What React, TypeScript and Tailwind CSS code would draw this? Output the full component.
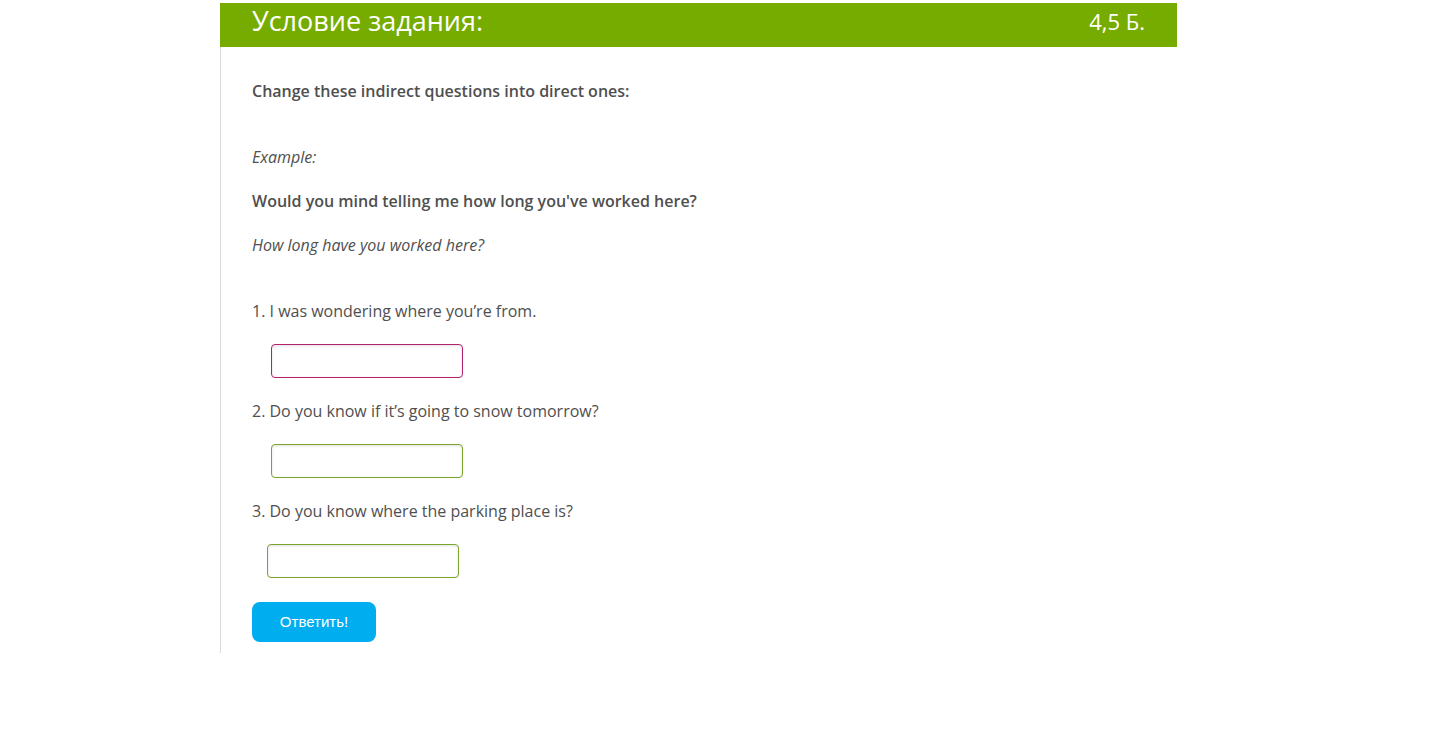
export default function App() {
  const font = { fontFamily: '"Open Sans", "Noto Sans", sans-serif' };
  return (
    <div className="min-h-[756px] w-full bg-white pt-[3px]" style={font}>
      <div className="ml-[220px] w-[957px]">
        <div className="flex h-[44px] items-center justify-between bg-[#76ac00] px-[32px] pb-[9px] text-white">
          <span className="text-[27px] leading-none">Условие задания:</span>
          <span className="text-[22px] leading-none">4,5 Б.</span>
        </div>
        <div className="border-l border-[#d9d9d9] pb-[11px] pl-[31px] pt-[32px] text-[16px] leading-[24px] text-[#4f4f4f]">
          <p className="font-semibold">Change these indirect questions into direct ones:</p>
          <p className="mt-[42px] italic">Example:</p>
          <p className="mt-[20px] font-semibold">Would you mind telling me how long you've worked here?</p>
          <p className="mt-[20px] italic">How long have you worked here?</p>
          <p className="mt-[42px]">1. I was wondering where you’re from.</p>
          <div className="mt-[21px] pl-[19px]">
            <input className="block h-[34px] w-[192px] rounded-[4px] border border-[#b5216b] bg-white shadow-[inset_0_1px_3px_rgba(0,0,0,0.12)] outline-none" />
          </div>
          <p className="mt-[21px]">2. Do you know if it’s going to snow tomorrow?</p>
          <div className="mt-[21px] pl-[19px]">
            <input className="block h-[34px] w-[192px] rounded-[4px] border border-[#7ba52a] bg-white shadow-[inset_0_1px_3px_rgba(0,0,0,0.12)] outline-none" />
          </div>
          <p className="mt-[21px]">3. Do you know where the parking place is?</p>
          <div className="mt-[21px] pl-[15px]">
            <input className="block h-[34px] w-[192px] rounded-[4px] border border-[#7ba52a] bg-white shadow-[inset_0_1px_3px_rgba(0,0,0,0.12)] outline-none" />
          </div>
          <button
            className="mt-[24px] flex h-[40px] w-[124px] items-center justify-center rounded-[8px] bg-[#00adef] text-[15px] text-white"
            style={{ fontFamily: '"Liberation Sans", Arial, sans-serif' }}
          >
            Ответить!
          </button>
        </div>
      </div>
    </div>
  );
}
